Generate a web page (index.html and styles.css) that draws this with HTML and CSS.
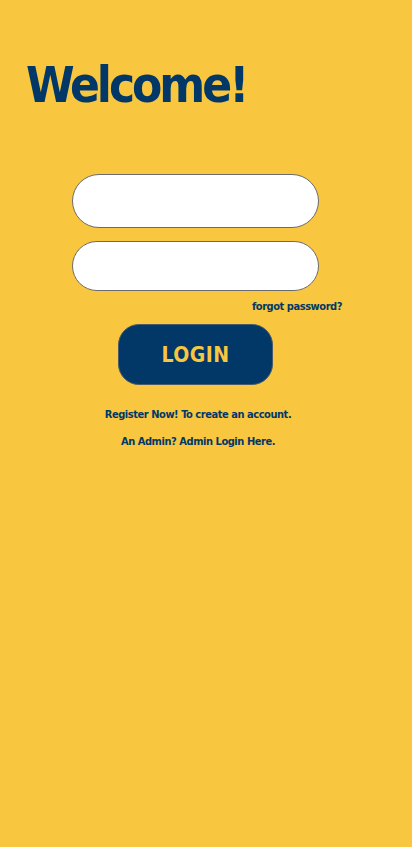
FILE: index.html
```html
<!DOCTYPE html>
<html>
<head>
<meta charset="utf-8">
<link rel="stylesheet" href="styles.css">
</head>
<body>
<main class="page">
  <h1 class="title">Welcome!</h1>
  <form class="form">
    <input class="field field-user" type="text">
    <input class="field field-pass" type="password">
    <a class="forgot">forgot password?</a>
    <button class="login" type="button">LOGIN</button>
    <a class="link link-register">Register Now! To create an account.</a>
    <a class="link link-admin">An Admin? Admin Login Here.</a>
  </form>
</main>
</body>
</html>
```
FILE: styles.css
```css
html, body {
  margin: 0;
  padding: 0;
  background: #f8c63f;
  height: 100%;
}
.page {
  font-family: "DejaVu Sans Condensed", "DejaVu Sans", sans-serif;
  color: #023868;
  padding: 56px 0 0 0;
}
.title {
  margin: 0 0 0 26px;
  font-size: 49px;
  font-weight: bold;
  line-height: 60px;
  letter-spacing: -3px;
}
.form {
  display: flex;
  flex-direction: column;
  align-items: flex-start;
  margin: 58px 0 0 72px;
  width: 270px;
}
.field {
  box-sizing: border-box;
  width: 247px;
  background: #fff;
  border: 1px solid #6b6b6b;
  border-radius: 27px;
  outline: none;
  padding: 0 20px;
}
.field-user {
  height: 54px;
}
.field-pass {
  height: 50px;
  margin-top: 13px;
}
.forgot {
  align-self: flex-end;
  font-size: 11px;
  font-weight: bold;
  letter-spacing: -0.45px;
  margin-top: 9px;
  line-height: 14px;
}
.login {
  margin: 10px 0 0 46px;
  width: 155px;
  height: 61px;
  border: 1px solid #4a5a6a;
  border-radius: 21px;
  background: #023868;
  color: #f8c63f;
  font-family: "DejaVu Sans Condensed", "DejaVu Sans", sans-serif;
  font-weight: bold;
  font-size: 21px;
  letter-spacing: 0.5px;
  padding: 0;
}
.link {
  align-self: stretch;
  text-align: center;
  margin-left: -18px;
  font-size: 11px;
  font-weight: bold;
  letter-spacing: -0.45px;
  line-height: 14px;
}
.link-register {
  margin-top: 23px;
}
.link-admin {
  margin-top: 13px;
}
```
